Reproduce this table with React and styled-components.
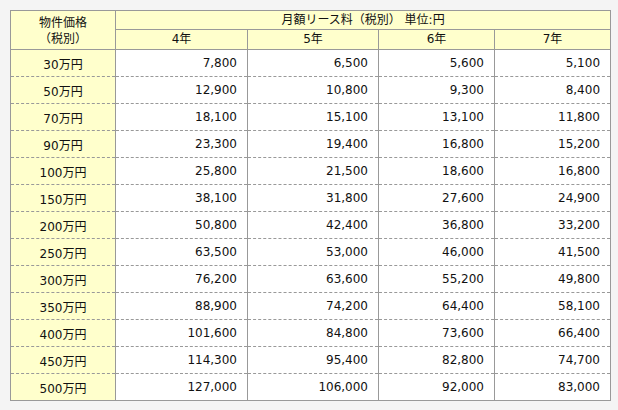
import React from "react";
import styled, { createGlobalStyle } from "styled-components";

const GlobalStyle = createGlobalStyle`
    html, body {
        margin: 0;
        padding: 0;
        background: #f4f4f4;
    }
    body {
        font-family: "DejaVu Sans", Verdana, "Noto Sans CJK JP", sans-serif;
        font-size: 12px;
        color: #111;
    }
`;

const years = ["4年", "5年", "6年", "7年"];

const rows = [
    ["30万円", "7,800", "6,500", "5,600", "5,100"],
    ["50万円", "12,900", "10,800", "9,300", "8,400"],
    ["70万円", "18,100", "15,100", "13,100", "11,800"],
    ["90万円", "23,300", "19,400", "16,800", "15,200"],
    ["100万円", "25,800", "21,500", "18,600", "16,800"],
    ["150万円", "38,100", "31,800", "27,600", "24,900"],
    ["200万円", "50,800", "42,400", "36,800", "33,200"],
    ["250万円", "63,500", "53,000", "46,000", "41,500"],
    ["300万円", "76,200", "63,600", "55,200", "49,800"],
    ["350万円", "88,900", "74,200", "64,400", "58,100"],
    ["400万円", "101,600", "84,800", "73,600", "66,400"],
    ["450万円", "114,300", "95,400", "82,800", "74,700"],
    ["500万円", "127,000", "106,000", "92,000", "83,000"],
];

const widths = [105, 132, 131, 116, 116];

export default function App() {
    return (
        <>
            <GlobalStyle />
            <Page>
                <LeaseTable>
                    <colgroup>
                        {widths.map((w, i) => (
                            <col key={i} style={{ width: w }} />
                        ))}
                    </colgroup>
                    <thead>
                        <tr>
                            <HeadCell rowSpan={2} $tall>
                                物件価格
                                <br />
                                （税別）
                            </HeadCell>
                            <HeadCell colSpan={4} $top>
                                月額リース料（税別） 単位:円
                            </HeadCell>
                        </tr>
                        <tr>
                            {years.map((y) => (
                                <HeadCell key={y} $sub>
                                    {y}
                                </HeadCell>
                            ))}
                        </tr>
                    </thead>
                    <tbody>
                        {rows.map((r, i) => (
                            <tr key={r[0]}>
                                <PriceCell $last={i === rows.length - 1}>{r[0]}</PriceCell>
                                {r.slice(1).map((v, j) => (
                                    <ValueCell key={j} $last={i === rows.length - 1}>
                                        {v}
                                    </ValueCell>
                                ))}
                            </tr>
                        ))}
                    </tbody>
                </LeaseTable>
            </Page>
        </>
    );
}

const Page = styled.div`
    padding: 10px;
`;

const LeaseTable = styled.table`
    width: 600px;
    table-layout: fixed;
    border-collapse: collapse;
    border: 1px solid #999;
`;

// header cells, the tall one holds two lines of text
const HeadCell = styled.th`
    background: #ffffcc;
    border: 1px solid #999;
    font-weight: normal;
    text-align: center;
    padding: ${(p) => (p.$tall ? "2px 0 0" : "0")};
    line-height: ${(p) => (p.$tall ? "16px" : "17px")};
    height: ${(p) => (p.$top ? "18px" : p.$sub ? "19px" : "auto")};
`;

const PriceCell = styled.td`
    background: #ffffcc;
    border-left: 1px solid #999;
    border-right: 1px solid #999;
    border-bottom: ${(p) => (p.$last ? "1px solid #999" : "1px dashed #999")};
    text-align: center;
    padding: 0;
    height: 26px;
`;

const ValueCell = styled.td`
    background: #fff;
    border-left: 1px solid #999;
    border-right: 1px solid #999;
    border-bottom: ${(p) => (p.$last ? "1px solid #999" : "1px dashed #999")};
    text-align: right;
    padding: 0 10px 0 0;
    height: 26px;
`;
